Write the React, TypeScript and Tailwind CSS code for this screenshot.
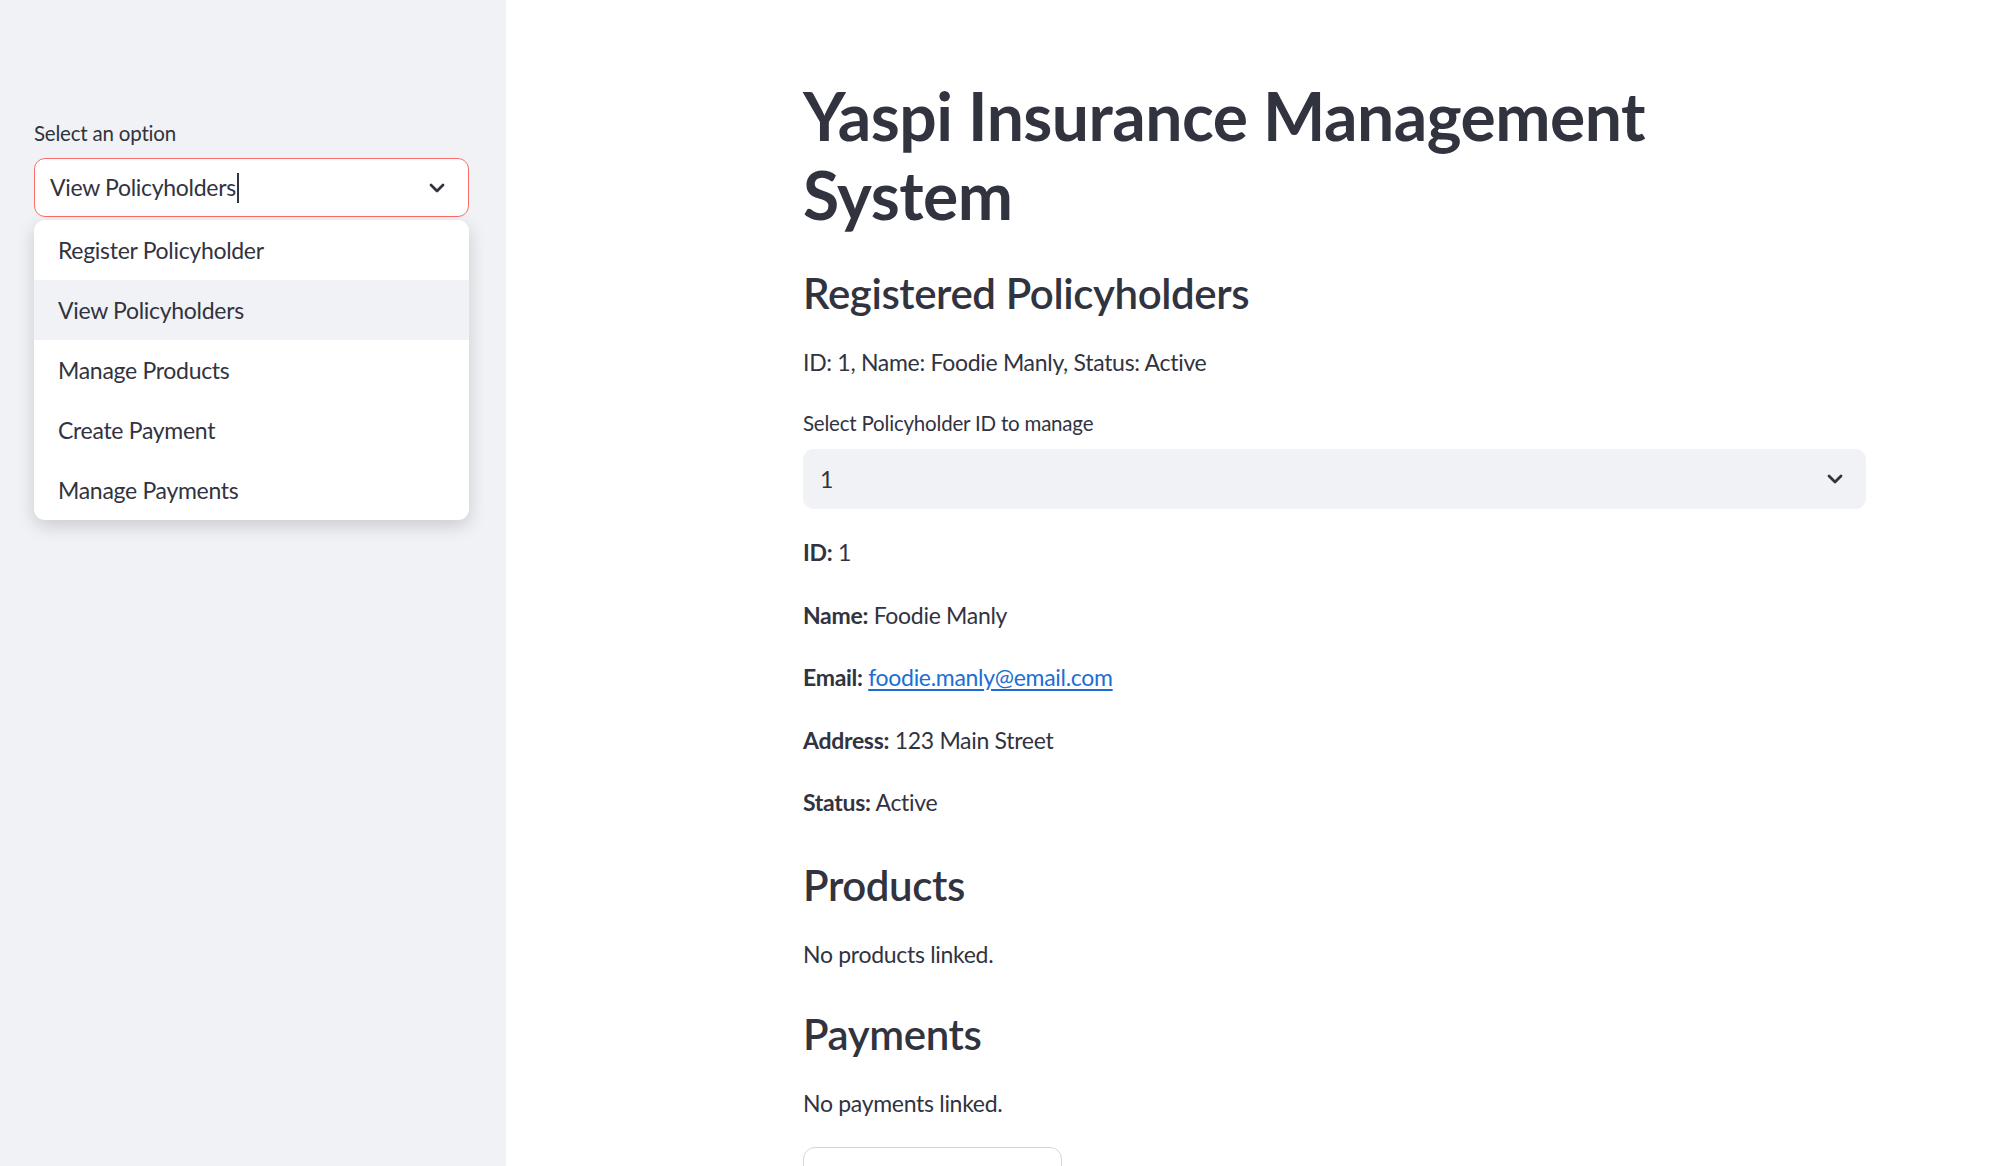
const font = "font-['Source_Sans_Pro','Lato',sans-serif]";

const Chevron = () => (
  <svg width="16" height="10" viewBox="0 0 16 10" fill="none">
    <path d="M2 2l6 6 6-6" stroke="#31333f" strokeWidth="2.8" strokeLinecap="round" strokeLinejoin="round" />
  </svg>
);

const options = [
  "Register Policyholder",
  "View Policyholders",
  "Manage Products",
  "Create Payment",
  "Manage Payments",
];

const Sidebar = () => {
  return (
    <aside className="w-[506px] shrink-0 bg-[#f0f2f6] px-[34px] pt-[120px]">
      <div className="w-[435px]">
        {/* Label */}
        <label className="block text-[20.5px] leading-[26px] tracking-[-0.2px] text-[#31333f]">Select an option</label>

        <div className="relative mt-[12px]">
          {/* Focused select */}
          <div className="flex h-[59px] items-center justify-between rounded-[11px] border-[1.5px] border-[#ff6c6c] bg-white pl-[15px] pr-[23px]">
            <span className="flex items-center text-[23px] tracking-[-0.3px] text-[#31333f]">
              View Policyholders
              <span className="ml-[1px] inline-block h-[30px] w-[2px] bg-[#31333f]" />
            </span>
            <Chevron />
          </div>

          {/* Open menu */}
          <ul className="absolute left-0 top-[62px] w-full overflow-hidden rounded-[11px] bg-white shadow-[0_6px_18px_rgba(0,0,0,0.16)]">
            {options.map((o, i) => (
              <li
                key={o}
                className={`flex h-[60px] items-center pl-[24px] text-[23px] tracking-[-0.3px] text-[#31333f] ${i === 1 ? "bg-[#f0f2f6]" : ""}`}
              >
                {o}
              </li>
            ))}
          </ul>
        </div>
      </div>
    </aside>
  );
};

const Field = ({ label, children }: { label: string; children: React.ReactNode }) => (
  <p className="mb-[24.5px] text-[23px] leading-[38px] tracking-[-0.3px] text-[#31333f]">
    <span className="font-bold">{label}</span> {children}
  </p>
);

export default function App() {
  return (
    <div className={`flex h-[1166px] overflow-hidden bg-white ${font}`}>
      <Sidebar />

      <main className="flex-1 pl-[297px] pt-[76px]">
        <div className="w-[1063px] text-[#31333f]">
          {/* Title */}
          <h1 className="text-[66px] font-bold leading-[79px] tracking-[-0.5px]">
            Yaspi Insurance Management
            <br />
            System
          </h1>

          <h3 className="mt-[34px] text-[42px] font-semibold leading-[50px] tracking-[-0.4px]">Registered Policyholders</h3>
          <p className="mt-[25px] text-[23px] leading-[38px] tracking-[-0.3px]">ID: 1, Name: Foodie Manly, Status: Active</p>

          {/* Policyholder select */}
          <label className="mt-[29px] block text-[20.5px] leading-[26px] tracking-[-0.2px]">Select Policyholder ID to manage</label>
          <div className="mt-[13px] flex h-[60px] items-center justify-between rounded-[11px] bg-[#f0f2f6] pl-[17px] pr-[23px]">
            <span className="text-[23px]">1</span>
            <Chevron />
          </div>

          {/* Details */}
          <div className="mt-[24px]">
            <Field label="ID:">1</Field>
            <Field label="Name:">Foodie Manly</Field>
            <Field label="Email:">
              <a href="#" className="text-[#1c6ed4] underline underline-offset-[3px]">
                foodie.manly@email.com
              </a>
            </Field>
            <Field label="Address:">123 Main Street</Field>
            <p className="text-[23px] leading-[38px] tracking-[-0.3px]">
              <span className="font-bold">Status:</span> Active
            </p>
          </div>

          <h3 className="mt-[39px] text-[42px] font-semibold leading-[50px] tracking-[-0.4px]">Products</h3>
          <p className="mt-[25px] text-[23px] leading-[38px] tracking-[-0.3px]">No products linked.</p>

          <h3 className="mt-[36px] text-[42px] font-semibold leading-[50px] tracking-[-0.4px]">Payments</h3>
          <p className="mt-[25px] text-[23px] leading-[38px] tracking-[-0.3px]">No payments linked.</p>

          <button className="mt-[25px] h-[60px] w-[259px] rounded-[12px] border border-[#d5d6da] bg-white" />
        </div>
      </main>
    </div>
  );
}
